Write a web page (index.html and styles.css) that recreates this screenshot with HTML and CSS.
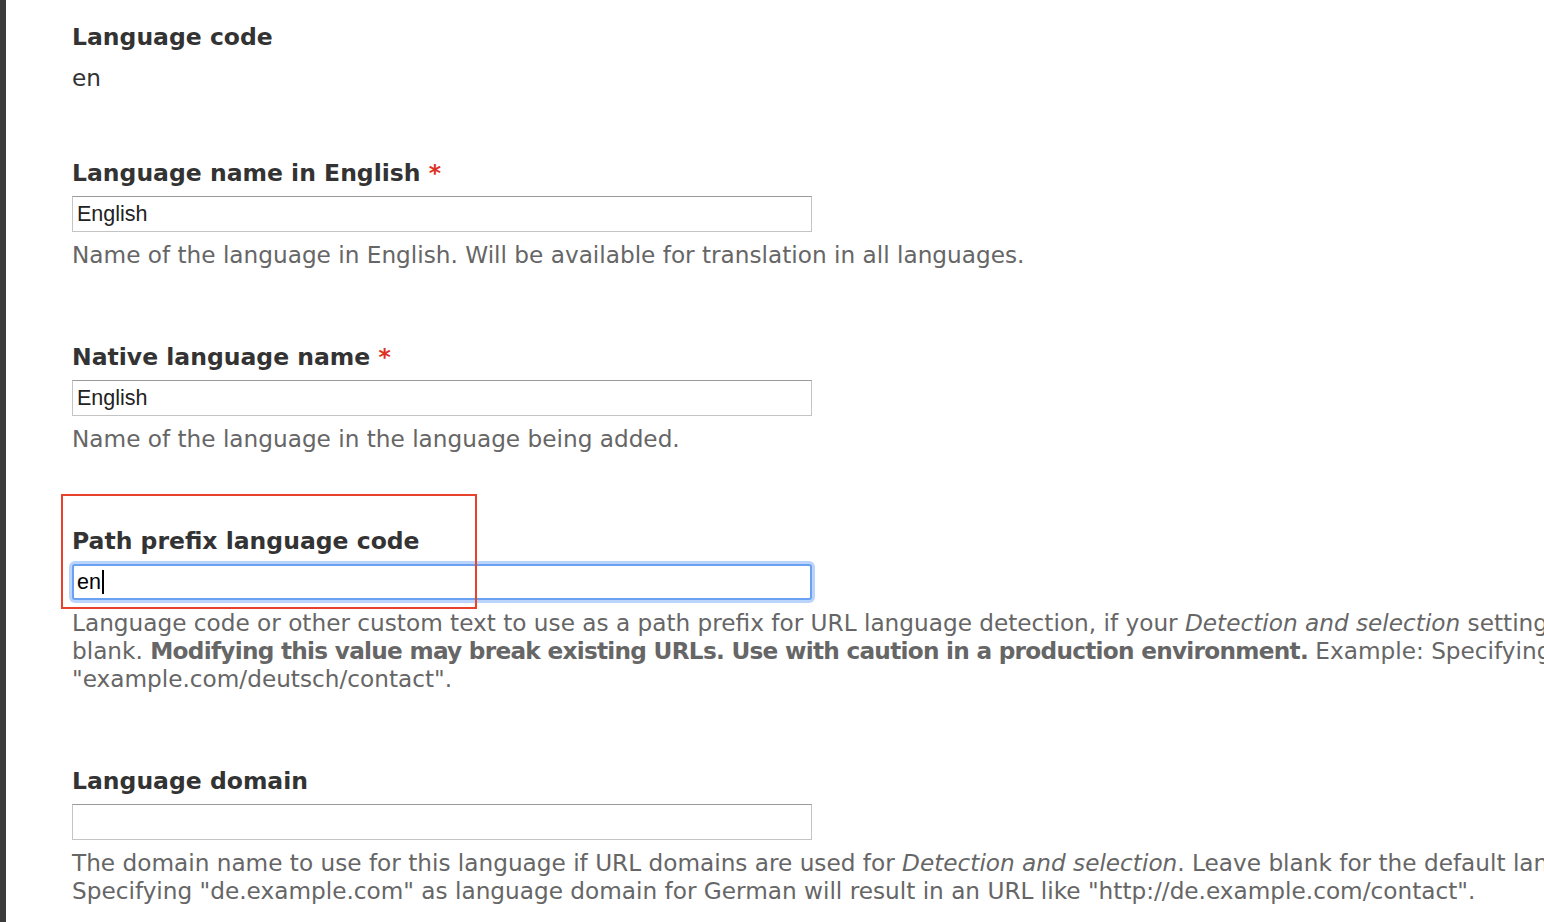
FILE: index.html
```html
<!DOCTYPE html>
<html lang="en">
<head>
<meta charset="utf-8">
<title>Language settings</title>
<link rel="stylesheet" href="styles.css">
</head>
<body>
<div class="page">
  <div class="sidebar"></div>
  <form class="form">
    <div class="item item-first">
      <div class="label">Language code</div>
      <div class="value">en</div>
    </div>

    <div class="item">
      <label class="label" for="name">Language name in English <span class="req">*</span></label>
      <input class="text" id="name" type="text" value="English">
      <div class="desc">Name of the language in English. Will be available for translation in all languages.</div>
    </div>

    <div class="item">
      <label class="label" for="native">Native language name <span class="req">*</span></label>
      <input class="text" id="native" type="text" value="English">
      <div class="desc">Name of the language in the language being added.</div>
    </div>

    <div class="item item-mark">
      <div class="mark"></div>
      <label class="label" for="prefix">Path prefix language code</label>
      <div class="text focused">en<span class="caret"></span></div>
      <div class="desc">Language code or other custom text to use as a path prefix for URL language detection, if your <em>Detection and selection</em> settings use URL path prefixes. For the default language, this value may be left<br>blank. <strong>Modifying this value may break existing URLs. Use with caution in a production environment.</strong> Example: Specifying "deutsch" as the path prefix code for German results in URLs like<br>"example.com/deutsch/contact".</div>
    </div>

    <div class="item">
      <label class="label" for="domain">Language domain</label>
      <input class="text" id="domain" type="text" value="">
      <div class="desc">The domain name to use for this language if URL domains are used for <em>Detection and selection</em>. Leave blank for the default language. <strong>Changing this value may break existing URLs.</strong> Example:<br>Specifying "de.example.com" as language domain for German will result in an URL like "http://de.example.com/contact".</div>
    </div>
  </form>
</div>
</body>
</html>
```

FILE: styles.css
```css
html, body {
  margin: 0;
  padding: 0;
  background: #fff;
  overflow: hidden;
}

.page {
  display: flex;
  width: 1544px;
  height: 922px;
  overflow: hidden;
}

.sidebar {
  flex: 0 0 6px;
  background: #3b3b3b;
}

.form {
  flex: 0 0 auto;
  padding: 23px 0 0 66px;
  font-family: "DejaVu Sans", Verdana, sans-serif;
  font-size: 23.2px;
  color: #333;
}

.item {
  position: relative;
  margin-top: 74px;
}

.item-first {
  margin-top: 0;
  margin-bottom: -7px;
}

.label {
  display: block;
  font-weight: bold;
  font-size: 23.5px;
  line-height: 28px;
  color: #333;
  margin-bottom: 9px;
}

.item-first .label {
  margin-bottom: 13px;
}

.value {
  line-height: 28px;
  color: #333;
}

.req {
  color: #e0301e;
}

.text {
  display: block;
  box-sizing: border-box;
  width: 740px;
  height: 36px;
  margin: 0;
  padding: 0 4px;
  border: 1px solid #c4c4c4;
  border-top-color: #999;
  background: #fff;
  font-family: "Liberation Sans", Arial, sans-serif;
  font-size: 21.5px;
  color: #222;
  outline: none;
}

.focused {
  display: flex;
  align-items: center;
  border: 2px solid #6aa1f2;
  border-radius: 3px;
  box-shadow: 0 0 0 3px #bad4fb;
  padding: 0 3px;
  color: #000;
}

.caret {
  display: inline-block;
  width: 2px;
  height: 24px;
  background: #000;
  margin-left: 1px;
}

.desc {
  margin-top: 9px;
  line-height: 28px;
  color: #666;
  white-space: nowrap;
}

.desc strong {
  font-weight: bold;
  letter-spacing: -0.72px;
}

.mark {
  position: absolute;
  left: -11px;
  top: -33px;
  width: 412px;
  height: 111px;
  border: 2px solid #e8412c;
  pointer-events: none;
  z-index: 2;
}
```
